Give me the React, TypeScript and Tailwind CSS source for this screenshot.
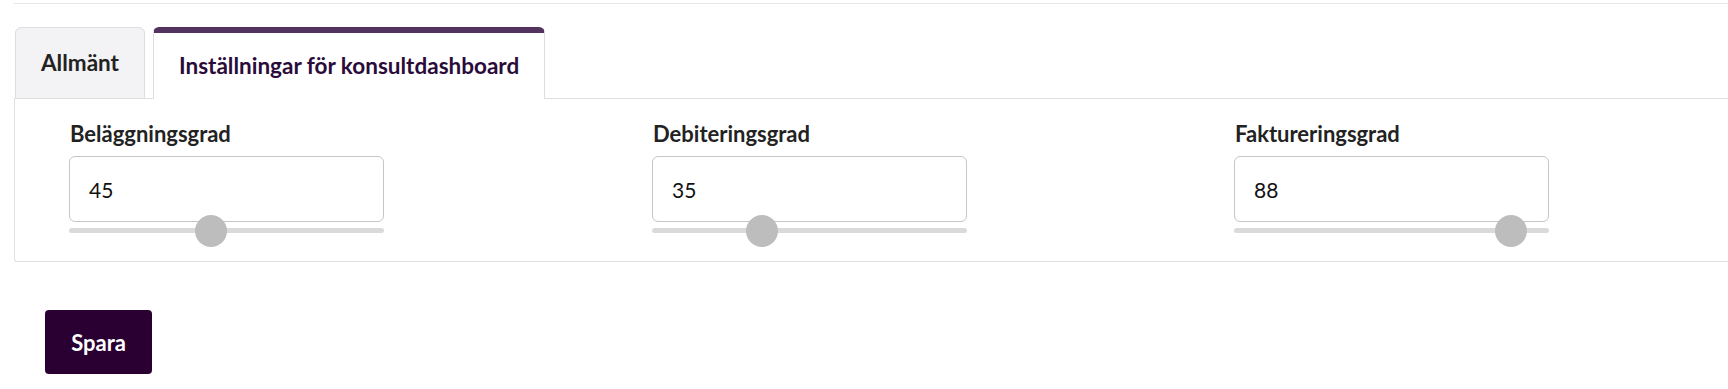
import { useState } from 'react'

type Field = { label: string; value: number }

const fields: Field[] = [
  { label: 'Beläggningsgrad', value: 45 },
  { label: 'Debiteringsgrad', value: 35 },
  { label: 'Faktureringsgrad', value: 88 }
]

const RateField = ({ label, value }: Field) => {
  const [val, setVal] = useState(String(value))
  const pct = Math.max(0, Math.min(100, Number(val) || 0))

  return (
    <div className="flex w-[315px] flex-col">
      <label className="pl-px text-[22px] leading-[26px] font-bold text-[#222222]">{label}</label>
      <input
        value={val}
        onChange={(e) => setVal(e.target.value)}
        className="mt-[9px] h-[66px] w-full rounded-[6px] border border-[#c6c6c6] bg-white pl-[19px] text-[21px] text-[#111111] outline-none"
      />
      <div className="relative mt-[6px] h-[5px] w-full rounded-full bg-[#dadada]">
        <div
          className="absolute top-1/2 size-[32px] -translate-x-1/2 -translate-y-1/2 rounded-full bg-[#bdbdbd]"
          style={{ left: `${pct}%` }}
        />
      </div>
    </div>
  )
}

export default function App() {
  const [tab, setTab] = useState(1)
  const tabs = ['Allmänt', 'Inställningar för konsultdashboard']

  return (
    <div className="min-h-[389px] w-full overflow-hidden bg-white pl-[14px] font-[Lato,sans-serif]">
      <div className="mt-[3px] border-t border-[#e6e6e6]" />

      <div className="mt-[23px] flex items-end gap-[8px] pl-px">
        {tabs.map((name, i) => (
          <button
            key={name}
            onClick={() => setTab(i)}
            className={
              i === tab
                ? 'relative z-10 -mb-px h-[72px] rounded-t-[6px] border-x border-t-[6px] border-x-[#dedede] border-t-[#533260] bg-white px-[25px] text-[22.5px] font-bold text-[#2a0b3a]'
                : 'relative -mb-px h-[72px] rounded-t-[6px] border border-[#dedede] bg-[#f3f2f5] px-[25px] text-[22.5px] font-bold text-[#222222]'
            }
          >
            {name}
          </button>
        ))}
      </div>

      <div className="rounded-bl-[3px] border border-r-0 border-[#e0e0e0] pt-[22px] pb-[28px] pl-[54px]">
        <div className="grid grid-cols-[583px_582px_315px]">
          {fields.map((f) => (
            <RateField key={f.label} {...f} />
          ))}
        </div>
      </div>

      <div className="pt-[48px] pl-[31px]">
        <button className="flex h-[64px] w-[107px] items-center justify-center rounded-[4px] bg-[#2a0033] text-[22px] font-bold text-white">
          Spara
        </button>
      </div>
    </div>
  )
}
